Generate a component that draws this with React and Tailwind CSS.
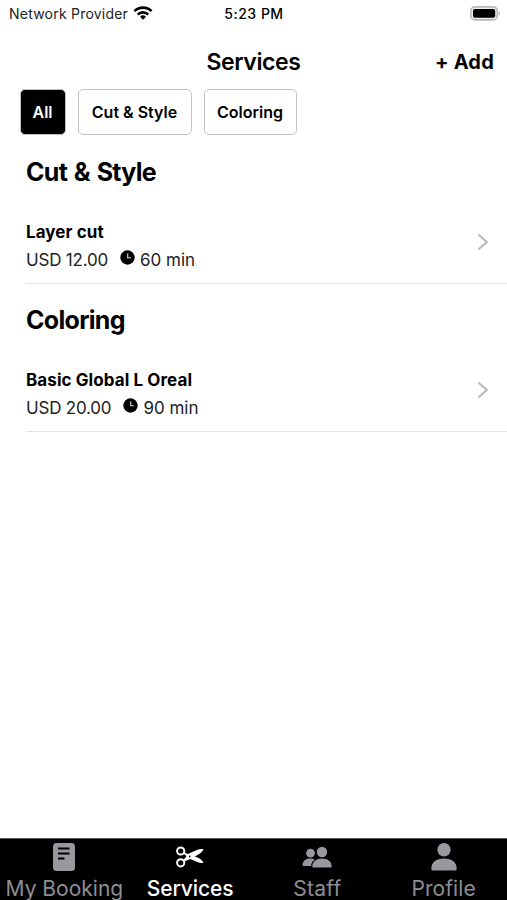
import React, { useState } from 'react';

const services = [
  { id: 1, category: 'Cut & Style', name: 'Layer cut', price: 'USD 12.00', duration: '60 min' },
  { id: 2, category: 'Coloring', name: 'Basic Global L Oreal', price: 'USD 20.00', duration: '90 min' },
];

const categories = ['Cut & Style', 'Coloring'];

const WifiIcon = () => (
  <svg width="20" height="14" viewBox="0 0 20 14" className="ml-[5px]" fill="none" stroke="#000" strokeWidth="2.6">
    <path d="M1.4 5.1a12.3 12.3 0 0 1 17.2 0" />
    <path d="M4.7 8.5a7.6 7.6 0 0 1 10.6 0" />
    <path d="M10 13.8L7 10.8a4.3 4.3 0 0 1 6 0z" fill="#000" stroke="none" />
  </svg>
);

const BatteryIcon = () => (
  <svg width="31" height="15" viewBox="0 0 31 15">
    <rect x="0.9" y="0.9" width="26.4" height="13" rx="4" fill="#eee" stroke="#b9b9b9" strokeWidth="1.6" />
    <rect x="3" y="3" width="22.2" height="8.8" rx="1.8" fill="#000" />
    <path d="M28.7 5.2c1.7.8 1.7 3.4 0 4.2z" fill="#aaa" />
  </svg>
);

const ClockIcon = () => (
  <svg width="15" height="15" viewBox="0 0 15 15">
    <circle cx="7.5" cy="7.5" r="7.2" fill="#000" />
    <path d="M7.7 3.4v4.4h3.2" fill="none" stroke="#ddd" strokeWidth="1.1" />
  </svg>
);

const ChevronIcon = () => (
  <svg width="12" height="18" viewBox="0 0 12 18" fill="none" stroke="#b8b8b8" strokeWidth="2">
    <path d="M1.5 1.5L9.800 9l-8.300 7.500" />
  </svg>
);

const BookingIcon = () => (
  <svg width="24" height="30" viewBox="0 0 24 30">
    <rect x="1" y="1" width="22" height="28" rx="3.5" fill="#98989f" />
    <path d="M6 6.500h11.500M6 11.500h11.500M6 16.500h6.500" stroke="#000" strokeWidth="2" />
  </svg>
);

const ScissorsIcon = () => (
  <svg width="28" height="24" viewBox="0 0 28 24" fill="none" stroke="#fff" strokeWidth="2">
    <circle cx="4.700" cy="6" r="3.600" />
    <circle cx="4.700" cy="17.800" r="3.600" />
    <path d="M7 14.800C10 13.500 10.500 9.700 13 8.600L21.500 4.800c1.900-.8 3.900-.9 5.900-.5-.7 2.200-2.300 3.700-4.200 4.700L14.500 14C12 15.200 10 15.200 8.100 17z" fill="#fff" stroke="none" />
    <path d="M8 6.500C9.500 8.700 11.500 8.500 13.500 9.600l5.500 1.900c3.500 1.100 6.600 3.100 8.600 6-1.900.8-3.900.6-5.600-.3L13 13.500C11 12.500 10.500 10.100 7 8.700z" fill="#fff" stroke="none" />
    <circle cx="13.600" cy="11.500" r="0.900" fill="#000" stroke="none" />
  </svg>
);

const StaffIcon = () => (
  <svg width="30" height="24" viewBox="0 0 30 24" fill="#98989f">
    <circle cx="8.500" cy="8.200" r="4.400" />
    <path d="M.6 20.200c0-4 3-6.700 7.700-6.700 1.800 0 3.200.4 4.400 1-2.300 1.600-3.400 3.600-3.600 6.500H1.500c-.6 0-.9-.3-.9-.8z" />
    <circle cx="20" cy="7" r="5.200" />
    <path d="M10.300 21.300c0-4.700 3.800-7.900 9.700-7.900s9.700 3.200 9.700 7.900c0 .8-.5 1.200-1.100 1.200H11.400c-.6 0-1.100-.4-1.100-1.200z" />
  </svg>
);

const ProfileIcon = () => (
  <svg width="26" height="30" viewBox="0 0 26 30" fill="#98989f">
    <circle cx="13" cy="7.700" r="6.700" />
    <path d="M.3 27c0-6.500 4.700-10.500 12.700-10.500S25.700 20.500 25.700 27c0 1-.5 1.600-1.400 1.600H1.700C.8 28.600.3 28 .3 27z" />
  </svg>
);

const tabs = [
  { label: 'My Booking', icon: BookingIcon, className: 'pl-[2px] tracking-[0px]' },
  { label: 'Services', icon: ScissorsIcon, className: 'tracking-[-0.1px]' },
  { label: 'Staff', icon: StaffIcon, className: 'pl-[1px] tracking-[0.3px]' },
  { label: 'Profile', icon: ProfileIcon, className: 'tracking-[0.1px]' },
];

const App = () => {
  const [selected, setSelected] = useState('All');
  const [activeTab, setActiveTab] = useState('Services');

  const visible = categories.filter((category) => selected === 'All' || selected === category);

  const chipClass = (name) =>
    `h-[46px] rounded-[5px] border-[1.5px] border-[#c4c4c4] text-[16px] font-semibold ${
      selected === name ? 'bg-black text-white' : 'bg-white text-black'
    }`;

  return (
    <div className="flex h-[900px] w-[507px] flex-col overflow-hidden bg-white font-['Inter',sans-serif] text-black">
      <div className="grid h-[26px] grid-cols-3 items-center pl-[9px] pr-[6px] text-[14px]">
        <div className="flex items-center whitespace-nowrap tracking-[0.22px] text-[#222]">
          <span>Network Provider</span>
          <WifiIcon />
        </div>
        <div className="pr-[2px] text-center font-medium tracking-[0.5px]">5:23 PM</div>
        <div className="flex justify-end">
          <BatteryIcon />
        </div>
      </div>

      <header className="grid h-[63px] grid-cols-3 items-center px-[13px] pt-[9px]">
        <div />
        <h1 className="text-center text-[23px] font-semibold tracking-[-0.4px]">Services</h1>
        <button className="pb-[1px] text-right text-[20px] font-bold tracking-[0.2px]">+ Add</button>
      </header>

      <div className="flex h-[46px] gap-3 pl-[19.5px]">
        <button onClick={() => setSelected('All')} className={`${chipClass('All')} w-[46px]`}>All</button>
        <button onClick={() => setSelected('Cut & Style')} className={`${chipClass('Cut & Style')} w-[114px]`}>Cut &amp; Style</button>
        <button onClick={() => setSelected('Coloring')} className={`${chipClass('Coloring')} w-[93px]`}>Coloring</button>
      </div>

      <main className="flex-1 pl-[26px]">
        {visible.map((category) => (
          <section key={category} className="h-[148px]">
            <h2 className="pt-[20px] text-[25px] leading-[34px] font-bold tracking-[-0.7px] [word-spacing:1.5px]">{category}</h2>
            {services
              .filter((service) => service.category === category)
              .map((service) => (
                <div key={service.id} className="mt-[16px] flex h-[79px] items-center justify-between border-b border-[#e4e4e4] pr-[18px]">
                  <div>
                    <div className="pt-[4px] text-[17px] leading-[28px] font-bold tracking-[0.08px]">{service.name}</div>
                    <div className="flex items-center text-[17px] leading-[28px] text-[#222]">
                      <span className="tracking-[-0.2px]">{service.price}</span>
                      <span className="mr-[5px] ml-3 pb-[6px]"><ClockIcon /></span>
                      <span>{service.duration}</span>
                    </div>
                  </div>
                  <span className="pb-[5px]"><ChevronIcon /></span>
                </div>
              ))}
          </section>
        ))}
      </main>

      <nav className="grid h-[62px] grid-cols-4 border-t border-[#555] bg-black">
        {tabs.map(({ label, icon: Icon, className }) => (
          <button key={label} onClick={() => setActiveTab(label)} className={`flex flex-col items-center ${className}`}>
            <span className="flex h-[39px] items-center pb-[3px]"><Icon /></span>
            <span
              className={`text-[21px] leading-[22px] whitespace-nowrap ${
                activeTab === label ? 'font-medium text-white' : 'text-[#8e8e93]'
              }`}
            >
              {label}
            </span>
          </button>
        ))}
      </nav>
    </div>
  );
};

export default App;
